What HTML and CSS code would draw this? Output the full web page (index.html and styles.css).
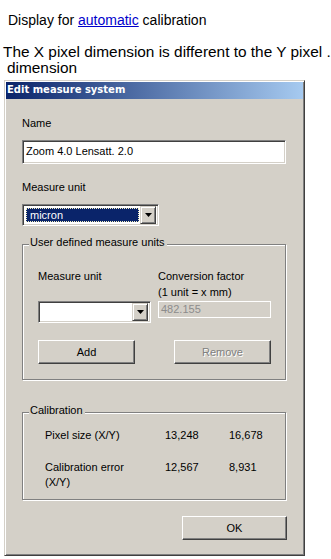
FILE: index.html
```html
<!DOCTYPE html>
<html>
<head>
<meta charset="utf-8">
<title>Edit measure system</title>
<link rel="stylesheet" href="styles.css">
</head>
<body>
<p class="intro">Display for <a href="#">automatic</a> calibration</p>
<p class="note"><span class="line">The X pixel dimension is different to the Y pixel .</span><span class="line line2">dimension</span></p>
<div class="dialog">
  <div class="titlebar">Edit measure system</div>
  <div class="dlg-body">
    <div class="label l-name">Name</div>
    <div class="field name-field">Zoom 4.0 Lensatt. 2.0</div>
    <div class="label l-unit">Measure unit</div>
    <div class="combo unit-combo">
      <span class="combo-value"><span class="sel"><span class="focus">micron</span></span></span>
      <span class="arrow-btn"><svg width="7" height="4" viewBox="0 0 7 4"><polygon points="0,0 7,0 3.5,4" fill="#000"/></svg></span>
    </div>
    <div class="group user-group">
      <span class="legend">User defined measure units</span>
      <div class="ud-grid">
        <div class="label">Measure unit</div>
        <div class="label">Conversion factor</div>
        <div></div>
        <div class="label">(1 unit = x mm)</div>
        <div class="combo ud-combo">
          <span class="combo-value"></span>
          <span class="arrow-btn"><svg width="7" height="4" viewBox="0 0 7 4"><polygon points="0,0 7,0 3.5,4" fill="#000"/></svg></span>
        </div>
        <div class="field conv-field">482.155</div>
      </div>
      <div class="btn-row">
        <button class="btn">Add</button>
        <button class="btn" disabled>Remove</button>
      </div>
    </div>
    <div class="group cal-group">
      <span class="legend">Calibration</span>
      <div class="cal-grid">
        <div>Pixel size (X/Y)</div><div>13,248</div><div>16,678</div>
        <div class="row2">Calibration error<br>(X/Y)</div><div class="row2">12,567</div><div class="row2">8,931</div>
      </div>
    </div>
    <div class="ok-row"><button class="btn ok-btn">OK</button></div>
  </div>
</div>
</body>
</html>
```

FILE: styles.css
```css
* { box-sizing: border-box; }

body {
  margin: 0;
  width: 331px;
  height: 559px;
  overflow: hidden;
  background: #fff;
  font-family: "Liberation Sans", Arial, sans-serif;
  color: #000;
}

.intro {
  margin: 0;
  padding: 12px 0 0 8px;
  font-size: 14px;
  line-height: 16px;
}

.intro a {
  color: #0000cc;
  text-decoration: underline;
}

.note {
  margin: 16px 0 0 3px;
  font-size: 15.4px;
  line-height: 16px;
  white-space: nowrap;
}

.note .line { display: block; }
.note .line2 { padding-left: 4px; }

.dialog {
  margin: 4px 0 0 4px;
  width: 301px;
  height: 476px;
  background: #d4d0c8;
  border: 1px solid;
  border-color: #d4d0c8 #404040 #404040 #d4d0c8;
  box-shadow: inset 1px 1px #fff, inset -1px -1px #808080;
  padding: 1px;
  font-size: 11px;
}

.titlebar {
  height: 17px;
  padding: 0 0 2px 1px;
  line-height: 15px;
  background: linear-gradient(to right, #0a246a, #a6caf0);
  color: #fff;
  font-family: "DejaVu Sans", sans-serif;
  font-weight: bold;
  font-size: 10px;
}

.dlg-body {
  padding: 0 0 0 16px;
  width: 280px;
}

.label {
  line-height: 13px;
  white-space: nowrap;
}

.l-name { margin-top: 18px; }
.l-unit { margin-top: 17px; }

.field {
  border: 1px solid;
  border-color: #808080 #fff #fff #808080;
  box-shadow: inset 1px 1px #404040, inset -1px -1px #d4d0c8;
  background: #fff;
  white-space: nowrap;
}

.name-field {
  margin-top: 10px;
  width: 264px;
  height: 24px;
  padding: 2px 0 0 3px;
  line-height: 17px;
}

.combo {
  display: flex;
  border: 1px solid;
  border-color: #808080 #fff #fff #808080;
  box-shadow: inset 1px 1px #404040, inset -1px -1px #d4d0c8;
  background: #fff;
  padding: 2px;
  height: 22px;
}

.unit-combo {
  margin-top: 10px;
  width: 137px;
}

.combo-value {
  flex: 1;
  display: flex;
  padding: 1px;
}

.sel {
  flex: 1;
  background: #0a246a;
  color: #fff;
  border: 1px dotted #f4f0c0;
  line-height: 12px;
  padding-left: 3px;
}

.arrow-btn {
  width: 16px;
  height: 18px;
  margin-top: -1px;
  margin-bottom: -1px;
  display: flex;
  align-items: center;
  justify-content: center;
  background: #d4d0c8;
  border: 1px solid;
  border-color: #d4d0c8 #404040 #404040 #d4d0c8;
  box-shadow: inset 1px 1px #fff, inset -1px -1px #808080;
}

.group {
  position: relative;
  width: 264px;
  border: 1px solid #808080;
  box-shadow: inset 1px 1px #fff, 1px 1px #fff;
}

.legend {
  position: absolute;
  top: -9px;
  left: 6px;
  padding: 0 2px 0 1px;
  background: #d4d0c8;
  line-height: 13px;
  white-space: nowrap;
}

.user-group {
  margin-top: 18px;
  height: 136px;
  padding: 23px 0 0 15px;
}

.ud-grid {
  display: grid;
  grid-template-columns: 113px 113px;
  grid-template-rows: 16px 16px auto;
  column-gap: 7px;
}

.ud-grid .label { line-height: 16px; }

.ud-combo {
  margin-top: 1px;
  height: 22px;
}

.conv-field {
  margin-top: 1px;
  height: 17px;
  background: #d4d0c8;
  border: 1px solid #fff;
  box-shadow: none;
  color: #8c8c8c;
  line-height: 14px;
  padding-left: 2px;
}

.btn-row {
  display: flex;
  gap: 39px;
  margin-top: 17px;
}

.btn {
  width: 97px;
  height: 24px;
  padding: 0;
  font-family: "Liberation Sans", Arial, sans-serif;
  font-size: 11px;
  color: #000;
  background: #d4d0c8;
  border: 1px solid;
  border-color: #fff #404040 #404040 #fff;
  box-shadow: inset -1px -1px #808080;
}

.btn:disabled {
  color: #808080;
  text-shadow: 1px 1px #fff;
}

.cal-group {
  margin-top: 32px;
  height: 88px;
  padding: 15px 0 0 22px;
}

.cal-grid {
  display: grid;
  grid-template-columns: 120px 64px auto;
  line-height: 15px;
}

.cal-grid .row2 { margin-top: 17px; }

.ok-row {
  width: 265px;
  display: flex;
  justify-content: flex-end;
  margin-top: 16px;
}

.ok-btn { width: 105px; }
```
